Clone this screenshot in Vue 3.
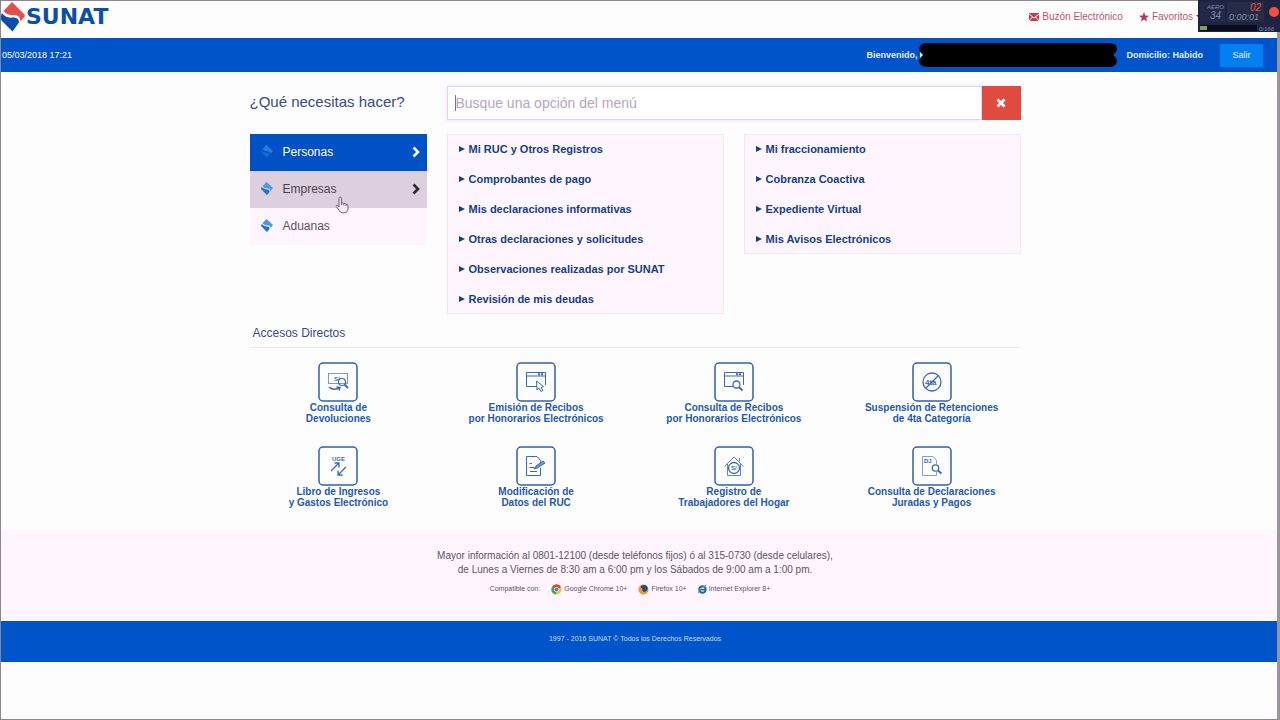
<script setup>
import { ref } from "vue";

const search = ref("");

const profiles = ref([
  { name: "Personas", state: "active", arrow: true },
  { name: "Empresas", state: "hovered", arrow: true },
  { name: "Aduanas", state: "", arrow: false },
]);

const menus = ref([
  [
    "Mi RUC y Otros Registros",
    "Comprobantes de pago",
    "Mis declaraciones informativas",
    "Otras declaraciones y solicitudes",
    "Observaciones realizadas por SUNAT",
    "Revisión de mis deudas",
  ],
  [
    "Mi fraccionamiento",
    "Cobranza Coactiva",
    "Expediente Virtual",
    "Mis Avisos Electrónicos",
  ],
]);

const shortcuts = ref([
  { icon: "refund", lines: ["Consulta de", "Devoluciones"] },
  { icon: "issue", lines: ["Emisión de Recibos", "por Honorarios Electrónicos"] },
  { icon: "query", lines: ["Consulta de Recibos", "por Honorarios Electrónicos"] },
  { icon: "suspend", lines: ["Suspensión de Retenciones", "de 4ta Categoría"] },
  { icon: "book", lines: ["Libro de Ingresos", "y Gastos Electrónico"] },
  { icon: "edit", lines: ["Modificación de", "Datos del RUC"] },
  { icon: "home", lines: ["Registro de", "Trabajadores del Hogar"] },
  { icon: "sworn", lines: ["Consulta de Declaraciones", "Juradas y Pagos"] },
]);

const clearSearch = () => {
  search.value = "";
};
</script>

<template>
  <div class="page">
    <header class="top">
      <a class="logo" href="#">
        <svg width="25" height="30" viewBox="0 0 25 30" aria-hidden="true">
          <path d="M11 0 L23.500 12.500 Q24.500 14 23 15.500 L19 19.500 Q20 12.500 12 13 Q6 13.500 2.500 9 Z" fill="#e2504a" />
          <path d="M1 11 Q5 16.500 11 15.500 Q18 15 18 20.500 L11.500 29.500 L-1 17 Z" fill="#0b4fae" />
        </svg>
        <span>SUNAT</span>
      </a>
      <nav class="top-links">
        <a href="#">
          <svg width="10" height="8" viewBox="0 0 10 8" aria-hidden="true">
            <rect width="10" height="8" fill="#c23a50" />
            <path d="M0 1 L5 5 L10 1 M0 8 L3.500 4 M10 8 L6.500 4" stroke="#fff" stroke-width="1" fill="none" />
          </svg>
          Buzón Electrónico
        </a>
        <a href="#">
          <svg width="10" height="10" viewBox="0 0 10 10" aria-hidden="true">
            <path d="M5 0 L6.400 3.400 L10 3.700 L7.200 6 L8.100 9.600 L5 7.600 L1.900 9.600 L2.800 6 L0 3.700 L3.600 3.400 Z" fill="#b83a54" />
          </svg>
          Favoritos
          <span class="caret-down"></span>
        </a>
      </nav>
    </header>

    <div class="bar">
      <span class="date">05/03/2018 17:21</span>
      <div class="user">
        <span>Bienvenido,</span>
        <svg class="mask" width="198" height="24" viewBox="0 0 198 24" aria-hidden="true">
          <path d="M6 0 H190 Q198 0 198 6 Q198 9 194 12 Q198 15 198 18 Q197 24 190 24 H8 Q0 24 0 17 L4 12 L0 7 Q0 1 6 0 Z" fill="#000" />
          <path d="M1 9 L4 12 L1 15 Z" fill="#dfe9fb" />
        </svg>
        <span>Domicilio: Habido</span>
        <button class="logout" type="button">Salir</button>
      </div>
    </div>

    <main class="container">
      <div class="finder">
        <label class="question" for="search">¿Qué necesitas hacer?</label>
        <div class="search">
          <input id="search" v-model="search" type="text" placeholder="Busque una opción del menú" />
          <span class="text-cursor"></span>
          <button type="button" aria-label="Limpiar" @click="clearSearch">
            <svg width="10" height="10" viewBox="0 0 10 10" aria-hidden="true">
              <path d="M1.500 1.500 L8.500 8.500 M8.500 1.500 L1.500 8.500" stroke="#fff" stroke-width="2.800" />
            </svg>
          </button>
        </div>

        <ul class="profiles">
          <li v-for="profile in profiles" :key="profile.name">
            <a href="#" :class="profile.state">
              <svg class="mark" width="12" height="13" viewBox="0 0 12 13" aria-hidden="true">
                <path d="M5.500 0 L12 6 L9.500 9 Q9.500 6.200 6 6.200 Q3 6.200 1.500 4 Z" fill="#4a98e6" />
                <path d="M0.500 5 Q3 7.400 6 7.400 Q8.800 7.400 8.500 10 L6 13 L0 7 Z" fill="#1c74d4" />
              </svg>
              <span>{{ profile.name }}</span>
              <svg v-if="profile.arrow" class="arrow" width="8" height="12" viewBox="0 0 8 12" aria-hidden="true">
                <path d="M1.500 1.500 L6 6 L1.500 10.500" stroke="currentColor" stroke-width="2.600" fill="none" />
              </svg>
            </a>
            <svg v-if="profile.state === 'hovered'" class="pointer" width="14" height="18" viewBox="0 0 14 18" aria-hidden="true">
              <path
                d="M4 11 V2.500 Q4 1 5.200 1 Q6.400 1 6.400 2.500 V7 Q8.500 6.300 8.800 7.600 Q10.600 7 11 8.400 Q13 8 13 10 V12.500 Q13 16.800 9 16.800 H7.500 Q5.500 16.800 4.200 14.500 L1.300 10.500 Q1 9 2.400 9.200 Z"
                fill="#f3eaf3" stroke="#6c5f6e" stroke-width="1"
              />
              <path d="M6.400 7 V9 M8.800 7.600 V9.400 M11 8.400 V10" stroke="#6c5f6e" stroke-width="1" />
            </svg>
          </li>
        </ul>

        <div class="panels">
          <ul v-for="(menu, index) in menus" :key="index" class="panel">
            <li v-for="item in menu" :key="item">
              <a href="#">{{ item }}</a>
            </li>
          </ul>
        </div>
      </div>

      <h2>Accesos Directos</h2>
      <div class="shortcuts">
        <a v-for="(shortcut, index) in shortcuts" :key="index" class="shortcut" href="#">
          <svg width="40" height="40" viewBox="0 0 40 40" fill="none" stroke="#3a68b4" aria-hidden="true">
            <rect x="1" y="1" width="38" height="38" rx="4" stroke="#2f60ae" stroke-width="1.500" />
            <g v-if="shortcut.icon === 'refund'">
              <rect x="10.500" y="11.500" width="19" height="10" stroke="#8a93cc" />
              <text x="16" y="19" class="tiny">S/</text>
              <circle cx="24" cy="20" r="3.500" stroke-width="1.200" />
              <path d="M26.500 22.500 L30 26" stroke-width="2" />
              <path d="M11 25 Q15 29 21 26 M18.500 25 L22 25.500 L21 28.500" stroke-width="1.500" />
            </g>
            <g v-else-if="shortcut.icon === 'issue' || shortcut.icon === 'query'">
              <path d="M22 24.500 H10.500 V10.500 H29.500 V23 M10.500 14 H29.500" />
              <path d="M22 12.300 H28" stroke-width="2" stroke-dasharray="2 1" />
              <path v-if="shortcut.icon === 'issue'" d="M20.500 19 L21 28 L23 26 L25 29.500 L27 28.500 L25 25.500 L27.500 24.500 Z" fill="#fff" />
              <g v-else>
                <circle cx="22.500" cy="22.500" r="3.500" fill="#fff" stroke-width="1.300" />
                <path d="M25 25 L28.500 28.500" stroke-width="2" />
              </g>
            </g>
            <g v-else-if="shortcut.icon === 'suspend'">
              <circle cx="20" cy="20" r="9" stroke-width="1.300" />
              <text x="13" y="23" class="tiny large">4ta</text>
              <path d="M13.500 26.500 L26.500 13.500" stroke-width="1.300" />
            </g>
            <g v-else-if="shortcut.icon === 'book'">
              <text x="14" y="15" class="tiny">UGE</text>
              <path d="M13 25 L21 17 M16.500 17 H21 V21.500 M28 21 L20 29 M20 24.500 V29 H24.500" stroke-width="1.300" />
            </g>
            <g v-else-if="shortcut.icon === 'edit'">
              <path d="M24.500 17 V14.500 L21 10.500 H10.500 V29.500 H24.500 V22" />
              <path d="M13.500 17.500 H16 M13.500 21.500 H18 M14 25.500 H21" stroke-width="1.200" />
              <path d="M18 23 L20 20 L27 15 L29 17 L21.500 22 Z" fill="#6f96d4" />
            </g>
            <g v-else-if="shortcut.icon === 'home'">
              <path d="M10.500 20.500 L20 11 L29.500 20.500 M13.500 18 V29.500 H26.500 V18 M25.500 15.500 V12" stroke="#6883c2" />
              <circle cx="20" cy="22" r="5.500" stroke-width="1.300" fill="#fff" />
              <text x="17" y="24" class="tiny">S/</text>
            </g>
            <g v-else>
              <path d="M22 29.500 H10.500 V10.500 H21 L24.500 14.500 V18 M24.500 26 V29.500 H22" stroke="#8a9bd0" />
              <text x="12" y="17" class="tiny">DJ</text>
              <circle cx="23.500" cy="22" r="3.200" stroke-width="1.300" />
              <path d="M26 24.500 L29.500 27.500" stroke-width="2" />
            </g>
          </svg>
          <span v-for="line in shortcut.lines" :key="line">{{ line }}</span>
        </a>
      </div>
    </main>

    <section class="info">
      <p>Mayor información al 0801-12100 (desde teléfonos fijos) ó al 315-0730 (desde celulares),</p>
      <p>de Lunes a Viernes de 8:30 am a 6:00 pm y los Sábados de 9:00 am a 1:00 pm.</p>
      <div class="browsers">
        <span>Compatible con:</span>
        <span class="browser">
          <svg width="11" height="11" viewBox="0 0 11 11" aria-hidden="true">
            <circle cx="5.500" cy="5.500" r="5" fill="#f0c330" />
            <path d="M5.500 5.500 L1 3 A5 5 0 0 1 10 3.200 Z" fill="#dc4436" />
            <path d="M5.500 5.500 L1 3 A5 5 0 0 0 5 10.500 Z" fill="#3fa657" />
            <circle cx="5.500" cy="5.500" r="2.200" fill="#3f80dd" stroke="#fff" stroke-width="0.700" />
          </svg>
          Google Chrome 10+
        </span>
        <span class="browser">
          <svg width="11" height="11" viewBox="0 0 11 11" aria-hidden="true">
            <circle cx="5.500" cy="5.500" r="5" fill="#ee8c26" />
            <circle cx="6" cy="4.500" r="3.600" fill="#234a8c" />
            <path d="M1 3 Q3 3 4.500 5 Q3.500 7 6 8 Q8 8 9.500 6 Q9 10 5 10.500 Q0 9 1 3 Z" fill="#f09a2c" />
          </svg>
          Firefox 10+
        </span>
        <span class="browser">
          <svg width="9" height="10" viewBox="0 0 9 10" aria-hidden="true">
            <circle cx="4.500" cy="5.500" r="3.200" fill="none" stroke="#1d64ac" stroke-width="2" />
            <path d="M2 5.700 H8" stroke="#1d64ac" stroke-width="1.500" />
            <path d="M0.500 9 Q0 5 8.500 1" fill="none" stroke="#5a9ad0" stroke-width="1" />
          </svg>
          Internet Explorer 8+
        </span>
      </div>
    </section>
    <footer class="copyright">1997 - 2016 SUNAT © Todos los Derechos Reservados</footer>

    <!-- screen recorder widget -->
    <svg class="recorder" width="82" height="32" viewBox="0 0 82 32" aria-hidden="true">
      <rect width="82" height="32" fill="#1d2340" />
      <rect x="2" y="2" width="25" height="20" fill="#222946" />
      <rect x="29" y="2" width="37" height="20" fill="#262c48" />
      <text x="9" y="9" class="lcd small">AERO</text>
      <text x="12" y="19" class="lcd">34</text>
      <text x="52" y="11" class="lcd red">02</text>
      <text x="31" y="20" class="lcd mid">0:00:01</text>
      <circle cx="76" cy="12" r="5" fill="#f5523c" />
      <rect x="2" y="25" width="57" height="6" fill="#090c1c" />
      <rect x="2" y="26" width="7" height="4" fill="#78a849" />
      <text x="61" y="31" class="lcd small">0/166</text>
    </svg>
  </div>
</template>

<style>
body {
  margin: 0;
  background: #fefdfe;
  font-family: "Liberation Sans", Arial, sans-serif;
}
</style>

<style scoped>
.page {
  box-sizing: border-box;
  position: relative;
  min-height: 100vh;
  border: 1px solid #8b878c;
  border-right: 3px solid #9a949c;
}

ul {
  list-style: none;
  margin: 0;
  padding: 0;
}

a {
  text-decoration: none;
}

button {
  border: none;
  padding: 0;
  font-family: inherit;
  cursor: pointer;
}

.top {
  display: flex;
  justify-content: space-between;
  align-items: center;
  height: 37px;
  padding-right: 75px;
}

.logo {
  display: flex;
  align-items: center;
  height: 32px;
  margin-bottom: 5px;
  font: bold 22px/32px "DejaVu Sans", sans-serif;
  color: #0c4fa8;
}

.top-links {
  display: flex;
  gap: 16px;
  padding-bottom: 6px;
}

.top-links a {
  display: flex;
  align-items: center;
  gap: 3px;
  font-size: 10px;
  line-height: 12px;
  color: #b55573;
}

.caret-down {
  border: 3px solid transparent;
  border-top-color: #6c3148;
  border-bottom: none;
}

.bar {
  display: flex;
  justify-content: space-between;
  align-items: center;
  height: 34px;
  padding: 0 14px 0 1px;
  background: #0054c9;
  color: #e3edfb;
  font-size: 9px;
  font-weight: bold;
}

.date {
  font-weight: normal;
  color: #fff;
}

.user {
  display: flex;
  align-items: center;
}

.mask {
  margin: 0 10px 0 1px;
}

.logout {
  width: 43px;
  height: 23px;
  margin-left: 17px;
  background: #0080f2;
  color: #e6f3ff;
  font-size: 9px;
}

.container {
  box-sizing: border-box;
  width: 100%;
  max-width: 779px;
  margin: 0 auto;
  padding: 14px 8px 0 0;
}

.finder {
  display: grid;
  grid-template-columns: 177px 1fr;
  column-gap: 20px;
  row-gap: 14px;
  align-items: start;
}

.question {
  font-size: 15px;
  line-height: 31px;
  color: #354b85;
}

.search {
  position: relative;
  display: flex;
}

.search input {
  box-sizing: border-box;
  flex: 1;
  min-width: 0;
  height: 34px;
  padding: 0 8px;
  border: 1px solid #e0d2f8;
  outline: none;
  background: #fff;
  box-shadow: 0 0 4px #e6dcfa;
  font-family: inherit;
  font-size: 14px;
  color: #555;
}

.search input::placeholder {
  color: #b9a4bf;
  opacity: 1;
}

.text-cursor {
  position: absolute;
  left: 8px;
  top: 9px;
  width: 1px;
  height: 16px;
  background: #777;
}

.search button {
  display: flex;
  align-items: center;
  justify-content: center;
  width: 39px;
  height: 34px;
  background: #e04b40;
}

.profiles li {
  position: relative;
}

.profiles a {
  box-sizing: border-box;
  display: flex;
  align-items: center;
  height: 37px;
  padding: 0 7px 2px 11px;
  background: #fff5ff;
  color: #5b525c;
  font-size: 12px;
}

.profiles a.active {
  background: #0051c6;
  color: #fff;
}

.profiles a.hovered {
  background: #dccfde;
  color: #4c444e;
}

.mark {
  margin-right: 10px;
}

.active .mark {
  opacity: 0.6;
}

.arrow {
  margin-left: auto;
}

.active .arrow {
  color: #fff;
}

.hovered .arrow {
  color: #2b262c;
}

.pointer {
  position: absolute;
  z-index: 1;
  left: 85px;
  top: 25px;
}

.panels {
  display: grid;
  grid-template-columns: 1fr 1fr;
  column-gap: 20px;
  align-items: start;
}

.panel {
  background: #fff5ff;
  box-shadow: inset 0 0 0 1px #f3e6f8;
}

.panel a {
  display: flex;
  align-items: center;
  padding-left: 12px;
  font-size: 11px;
  font-weight: bold;
  line-height: 30px;
  color: #123f86;
}

.panel a::before {
  content: "";
  margin-right: 4px;
  border: 3px solid transparent;
  border-left: 6px solid #123f86;
  border-right: none;
}

h2 {
  margin: 11px 0 0;
  padding: 0 3px 6px;
  border-bottom: 1px solid #ebe7ef;
  font-size: 12px;
  font-weight: normal;
  line-height: 16px;
  color: #354b85;
}

.shortcuts {
  display: grid;
  grid-template-columns: repeat(4, 1fr);
  margin: 14px -10px 0;
}

.shortcut {
  display: flex;
  flex-direction: column;
  align-items: center;
  padding-bottom: 22px;
  font-size: 10px;
  font-weight: bold;
  line-height: 11px;
  color: #2259ae;
}

.tiny {
  fill: #3a68b4;
  stroke: none;
  font: bold 6px "Liberation Sans", Arial, sans-serif;
}

.tiny.large {
  font-size: 8px;
}

.info {
  box-sizing: border-box;
  padding: 19px 8px 26px 0;
  background: #fff5ff;
  text-align: center;
  color: #5d545f;
}

.info p {
  margin: 0;
  font-size: 10px;
  line-height: 14px;
}

.browsers {
  display: flex;
  justify-content: center;
  align-items: center;
  gap: 11px;
  padding-top: 6px;
  padding-right: 10px;
  font-size: 7px;
  line-height: 12px;
}

.browser {
  display: flex;
  align-items: center;
  gap: 2px;
}

.copyright {
  padding: 10px 8px 15px 0;
  background: #0054c9;
  color: #c9dcf8;
  font-size: 7px;
  line-height: 16px;
  text-align: center;
}

.recorder {
  position: absolute;
  top: -1px;
  right: -3px;
}

.lcd {
  fill: #8188a0;
  font: italic 10px "Liberation Sans", Arial, sans-serif;
}

.lcd.mid {
  font-size: 9px;
}

.lcd.small {
  font-size: 6px;
}

.lcd.red {
  fill: #f0503e;
}
</style>
